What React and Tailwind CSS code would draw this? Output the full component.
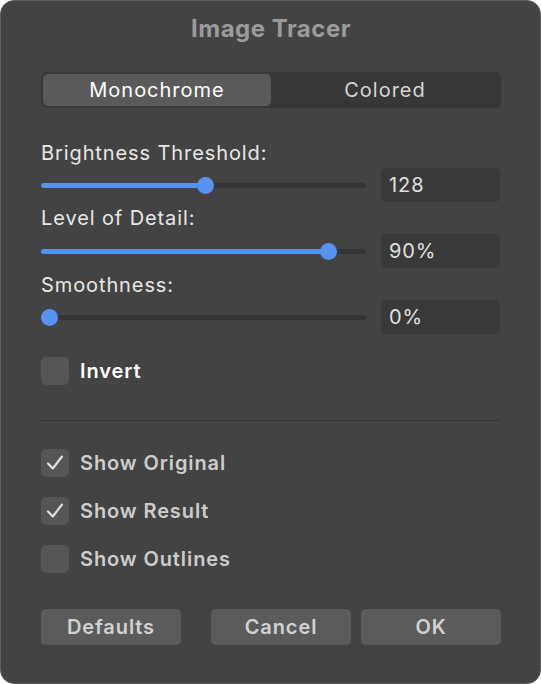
import React from "react";

const font = { fontFamily: "Inter, 'Liberation Sans', sans-serif" };

function Slider({ pos }) {
  return (
    <div className="relative w-[325px] h-[17px] flex items-center">
      <div className="w-full h-[5px] rounded-full bg-[#353535]" />
      <div
        className="absolute left-0 top-[6px] h-[5px] rounded-full bg-[#5592f2]"
        style={{ width: pos }}
      />
      <div
        className="absolute top-0 w-[17px] h-[17px] rounded-full bg-[#5592f2]"
        style={{ left: pos - 8.5 }}
      />
    </div>
  );
}

function SliderRow({ label, pos, value, labelMt, rowMt }) {
  return (
    <>
      <div className={`${labelMt} h-[24px] flex items-center text-[20px] tracking-[0.9px] text-[#e8e8e8]`}>{label}</div>
      <div className={`${rowMt} flex items-center h-[34px]`}>
        <Slider pos={pos} />
        <div className="ml-[15px] w-[119px] h-[34px] rounded-[5px] bg-[#393939] flex items-center pl-[8px] text-[20px] tracking-[0.9px] text-[#e0e0e0]">
          {value}
        </div>
      </div>
    </>
  );
}

function Check({ checked, label, strong, mt }) {
  return (
    <div className={`${mt} flex items-center h-[28px]`}>
      <div className="w-[28px] h-[28px] rounded-[5px] bg-[#555555] flex items-center justify-center">
        {checked && (
          <svg width="22" height="22" viewBox="0 0 22 22">
            <polyline points="4,11.5 8.8,16.5 18,4.5" fill="none" stroke="#e2e2e2" strokeWidth="2.1" strokeLinecap="round" strokeLinejoin="round" />
          </svg>
        )}
      </div>
      <span className={`ml-[11px] text-[20px] tracking-[0.9px] font-semibold ${strong ? "text-white" : "text-[#cdcdcd]"}`}>{label}</span>
    </div>
  );
}

function Btn({ children, ml }) {
  return (
    <div className={`${ml} w-[140px] h-[36px] rounded-[5px] bg-[#5b5b5b] flex items-center justify-center text-[20px] tracking-[0.9px] font-semibold text-[#d2d2d2]`}>
      {children}
    </div>
  );
}

export default function App() {
  return (
    <div className="w-[541px] h-[684px] bg-white" style={font}>
      <div className="w-[541px] h-[684px] rounded-[14px] bg-[#434343] border border-[#5e5e5e] flex flex-col pl-[40px] pr-[39px] overflow-hidden">
        <div className="h-[56px] flex items-center justify-center text-[24px] tracking-[0.5px] font-bold text-[#9b9b9b]">Image Tracer</div>
        <div className="mt-[15px] h-[36px] rounded-[6px] bg-[#373737] p-[2px] flex">
          <div className="w-[228px] h-[32px] rounded-[5px] bg-[#5a5a5a] flex items-center justify-center text-[20px] tracking-[1px] text-white">Monochrome</div>
          <div className="flex-1 flex items-center justify-center text-[20px] tracking-[1px] text-[#d6d6d6]">Colored</div>
        </div>
        <SliderRow label="Brightness Threshold:" pos={164} value="128" labelMt="mt-[33px]" rowMt="mt-[3px]" />
        <SliderRow label="Level of Detail:" pos={287} value="90%" labelMt="mt-[4px]" rowMt="mt-[4px]" />
        <SliderRow label="Smoothness:" pos={8} value="0%" labelMt="mt-[5px]" rowMt="mt-[3px]" />
        <Check label="Invert" strong mt="mt-[23px]" />
        <div className="mt-[35px] h-[1px] bg-[#363636]" />
        <Check label="Show Original" checked mt="mt-[28px]" />
        <Check label="Show Result" checked mt="mt-[20px]" />
        <Check label="Show Outlines" mt="mt-[20px]" />
        <div className="mt-[36px] flex">
          <Btn ml="">Defaults</Btn>
          <Btn ml="ml-[30px]">Cancel</Btn>
          <Btn ml="ml-[10px]">OK</Btn>
        </div>
      </div>
    </div>
  );
}
